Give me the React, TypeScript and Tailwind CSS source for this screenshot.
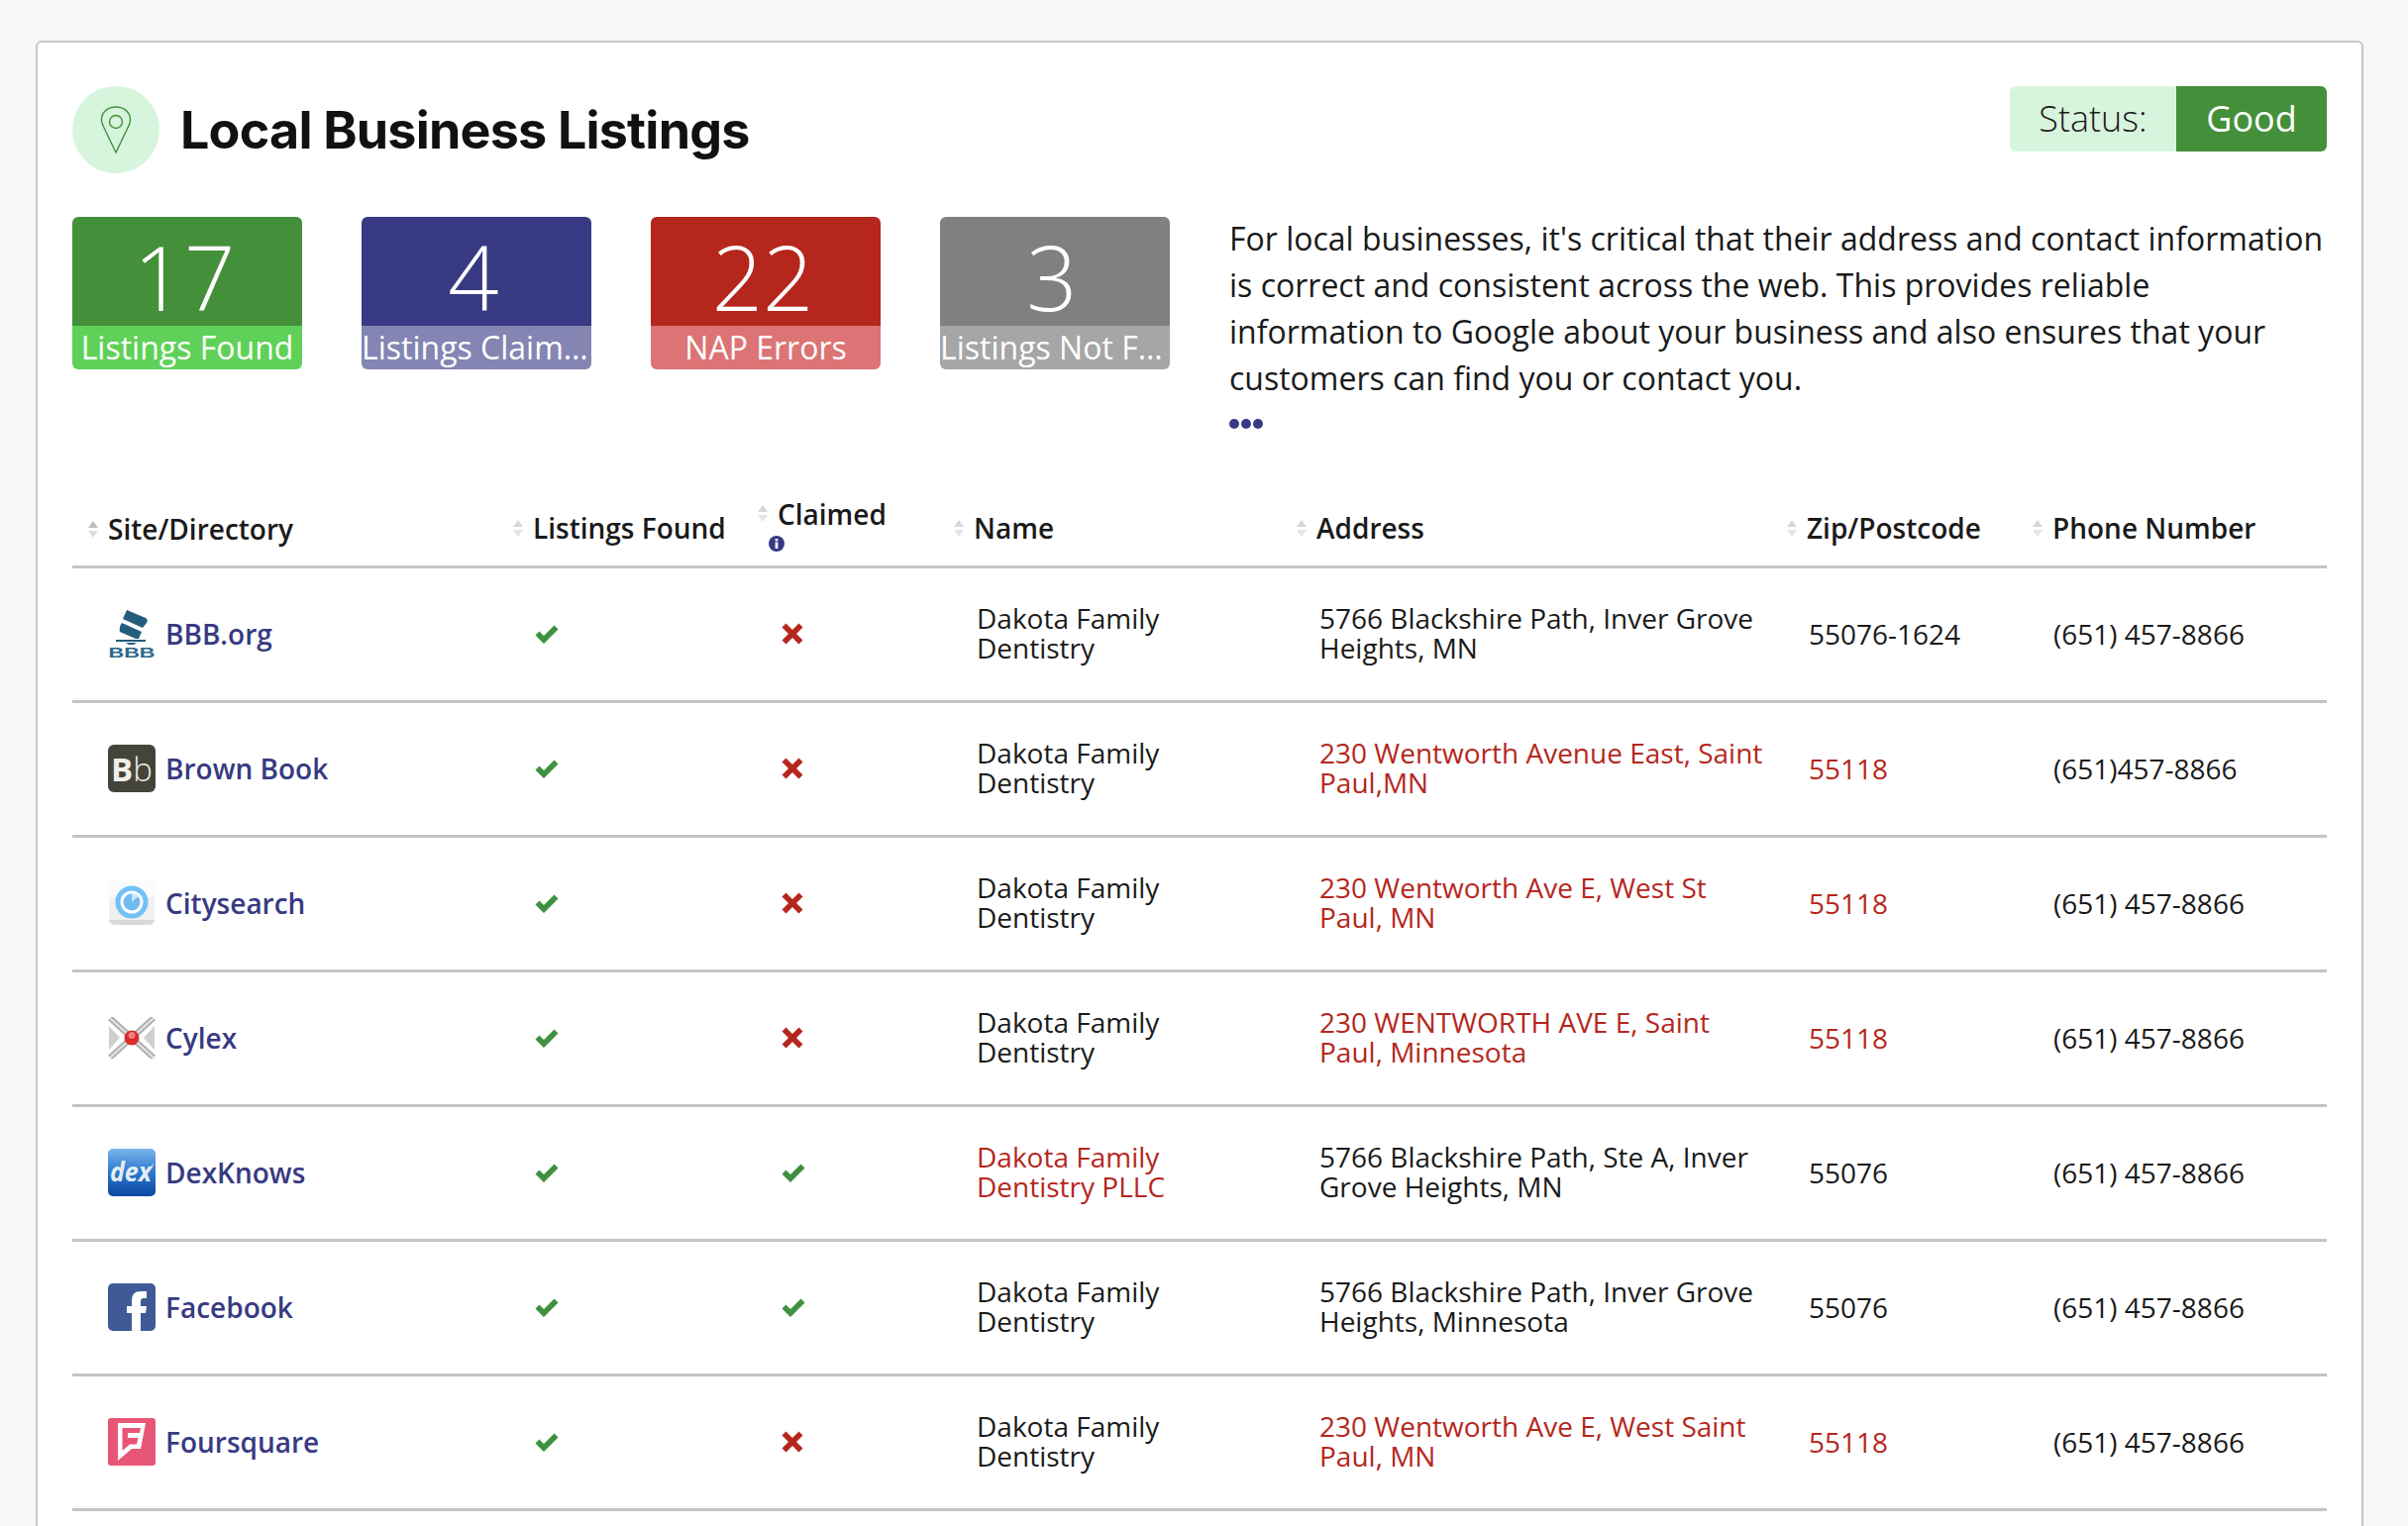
import { ReactNode } from "react"

const indigo = "#373a82"

function SortIcon({ dark }: { dark?: boolean }) {
  return (
    <svg viewBox="0 0 10 17" className="mr-[10px] inline-block h-[17px] w-[10px] shrink-0">
      <path d="M5 0 L10 7 H0 Z" fill={dark ? "#bdbdbd" : "#d8d8d8"} />
      <path d="M5 17 L10 10 H0 Z" fill={dark ? "#dedede" : "#e4e4e4"} />
    </svg>
  )
}

function Check() {
  return (
    <svg viewBox="0 0 24 19" className="h-[19px] w-[24px]">
      <path d="M0.5 10.5 L4.5 6.5 L9 11 L19.5 0.5 L23.5 4.5 L9 19 Z" fill="#3f9140" />
    </svg>
  )
}

function Cross() {
  return (
    <svg viewBox="0 0 22 22" className="h-[22px] w-[22px]">
      <path d="M4.5 0.5 L11 7 L17.5 0.5 L21.5 4.5 L15 11 L21.5 17.5 L17.5 21.5 L11 15 L4.5 21.5 L0.5 17.5 L7 11 L0.5 4.5 Z" fill="#b5271d" />
    </svg>
  )
}

function BbbLogo() {
  return (
    <svg viewBox="0 0 48 48" className="h-[48px] w-[48px] overflow-visible">
      <path d="M19 0 L38 8 Q41 10 39 13 L35 18 L15 9 Z" fill="#245d7c" />
      <path d="M14 13 L34 22 L31 29 L28 29 L12 22 Q11 17 14 13 Z" fill="#245d7c" />
      <path d="M8 30 H38 V32 H8 Z" fill="#245d7c" />
      <path d="M18 33 H29 L26 35 H21 Z" fill="#245d7c" />
      <text x="24" y="47.5" textAnchor="middle" fontSize="15" fontWeight="800" fill="#2b6a8a" fontFamily="'Liberation Sans', sans-serif" textLength="47" lengthAdjust="spacingAndGlyphs">BBB</text>
    </svg>
  )
}

function BrownBookLogo() {
  return (
    <div className="flex h-[48px] w-[48px] items-center justify-center rounded-[6px] bg-[#45443b] font-['Open_Sans',sans-serif] text-[33px] leading-none">
      <span className="font-bold text-[#f0efe8]">B</span>
      <span className="font-light text-[#f0efe8]">b</span>
    </div>
  )
}

function CitysearchLogo() {
  return (
    <svg viewBox="0 0 48 48" className="h-[48px] w-[48px]">
      <rect x="1" y="2" width="46" height="40" rx="3" fill="#fbfbfb" />
      <rect x="1" y="18" width="46" height="24" fill="#f0f0f0" />
      <path d="M1 41 Q2 46 7 46 H41 Q46 46 47 41 Z" fill="#d9d9d9" />
      <circle cx="24" cy="23" r="16" fill="#fff" />
      <circle cx="24" cy="23" r="14" fill="none" stroke="#72c1f6" strokeWidth="5" />
      <circle cx="24" cy="23" r="8.5" fill="#6dbbf0" />
      <path d="M24 23 L24 14 A9 9 0 0 1 31 17 Z" fill="#c9e7fb" />
    </svg>
  )
}

function CylexLogo() {
  return (
    <svg viewBox="0 0 48 42" className="h-[42px] w-[48px]">
      <path d="M1 9 L12 21 L1 33 Z" fill="#cfcfcf" />
      <path d="M47 9 L36 21 L47 33 Z" fill="#cfcfcf" />
      <path d="M2 1 L24 21 L2 41 M46 1 L24 21 L46 41" fill="none" stroke="#b0b0b0" strokeWidth="6" />
      <path d="M2 1 L24 21 L2 41 M46 1 L24 21 L46 41" fill="none" stroke="#e4e4e4" strokeWidth="2" />
      <circle cx="24" cy="21" r="7.5" fill="#d92b2b" />
      <circle cx="24" cy="18.5" r="3.5" fill="#ef7f7f" />
    </svg>
  )
}

function DexLogo() {
  return (
    <svg viewBox="0 0 48 48" className="h-[48px] w-[48px]">
      <defs>
        <linearGradient id="dexBg" x1="0" y1="0" x2="0" y2="1">
          <stop offset="0" stopColor="#7ab6ea" />
          <stop offset="0.5" stopColor="#2a78cf" />
          <stop offset="1" stopColor="#0d47a1" />
        </linearGradient>
      </defs>
      <rect width="48" height="48" rx="5" fill="url(#dexBg)" />
      <text x="2" y="33" fontSize="26" fontWeight="700" fontStyle="italic" fill="#e4eef2" fontFamily="'Open Sans', sans-serif" textLength="42" lengthAdjust="spacingAndGlyphs">dex</text>
      <path d="M36 26 Q41 20 47 14 Q43 21 38 28 Z" fill="#e4eef2" />
    </svg>
  )
}

function FacebookLogo() {
  return (
    <svg viewBox="0 0 48 48" className="h-[48px] w-[48px]">
      <rect width="48" height="48" rx="5" fill="#3f5a96" />
      <path d="M24 48 V30 H19 V23 H24 V17 Q24 8 33 8 H39 V15 H36 Q33 15 33 18 V23 H39 L38 30 H33 V48 Z" fill="#fff" />
    </svg>
  )
}

function FoursquareLogo() {
  return (
    <svg viewBox="0 0 48 48" className="h-[48px] w-[48px]">
      <rect width="48" height="48" rx="3" fill="#e85677" />
      <path fillRule="evenodd" d="M10 5 H38 L33 31 H24 L10 43 Z M14.5 10 V33 L22 26.5 H29 L30.5 20 H20 V15 H32 L33 10 Z" fill="#fff" />
    </svg>
  )
}

type Row = {
  logo: ReactNode
  site: string
  claimed: boolean
  name: string
  nameErr?: boolean
  address: string
  addressErr?: boolean
  zip: string
  zipErr?: boolean
  phone: string
}

const rows: Row[] = [
  { logo: <BbbLogo />, site: "BBB.org", claimed: false, name: "Dakota Family Dentistry", address: "5766 Blackshire Path, Inver Grove Heights, MN", zip: "55076-1624", phone: "(651) 457-8866" },
  { logo: <BrownBookLogo />, site: "Brown Book", claimed: false, name: "Dakota Family Dentistry", address: "230 Wentworth Avenue East, Saint Paul,MN", addressErr: true, zip: "55118", zipErr: true, phone: "(651)457-8866" },
  { logo: <CitysearchLogo />, site: "Citysearch", claimed: false, name: "Dakota Family Dentistry", address: "230 Wentworth Ave E, West St Paul, MN", addressErr: true, zip: "55118", zipErr: true, phone: "(651) 457-8866" },
  { logo: <CylexLogo />, site: "Cylex", claimed: false, name: "Dakota Family Dentistry", address: "230 WENTWORTH AVE E, Saint Paul, Minnesota", addressErr: true, zip: "55118", zipErr: true, phone: "(651) 457-8866" },
  { logo: <DexLogo />, site: "DexKnows", claimed: true, name: "Dakota Family Dentistry PLLC", nameErr: true, address: "5766 Blackshire Path, Ste A, Inver Grove Heights, MN", zip: "55076", phone: "(651) 457-8866" },
  { logo: <FacebookLogo />, site: "Facebook", claimed: true, name: "Dakota Family Dentistry", address: "5766 Blackshire Path, Inver Grove Heights, Minnesota", zip: "55076", phone: "(651) 457-8866" },
  { logo: <FoursquareLogo />, site: "Foursquare", claimed: false, name: "Dakota Family Dentistry", address: "230 Wentworth Ave E, West Saint Paul, MN", addressErr: true, zip: "55118", zipErr: true, phone: "(651) 457-8866" },
]

const stats = [
  { value: "17", label: "Listings Found", top: "bg-[#448f3a]", bottom: "bg-[#5fd158]" },
  { value: "4", label: "Listings Claimed", top: "bg-[#373a82]", bottom: "bg-[#8485b2]" },
  { value: "22", label: "NAP Errors", top: "bg-[#b5271d]", bottom: "bg-[#dc7475]" },
  { value: "3", label: "Listings Not Found", top: "bg-[#808080]", bottom: "bg-[#a6a6a6]" },
]

export default function App() {
  return (
    <div className="h-[1541px] overflow-hidden bg-[#f8f8f6] pl-[36px] pr-[45px] pt-[41px] font-['Open_Sans',sans-serif] text-[#1a1a1a]">
      <div className="h-[1600px] rounded-t-[6px] border-2 border-[#c6c6c6] bg-white px-[35px] pt-[44px]">
        <div className="flex items-start justify-between">
          <div className="flex items-center">
            <div className="flex h-[88px] w-[88px] items-center justify-center rounded-full bg-[#d7f5dd]">
              <svg viewBox="0 0 32 48" className="h-[48px] w-[32px]" fill="none" stroke="#448f3a" strokeWidth="1.4">
                <path d="M16 47 L4 22 Q1 16 1.5 13 C2 6 8 1 16 1 C24 1 30 6 30.5 13 Q31 16 28 22 Z" />
                <circle cx="16" cy="16" r="6.5" />
              </svg>
            </div>
            <h1 className="ml-[21px] mt-[2px] font-['Inter',sans-serif] text-[52px] font-bold leading-none tracking-[-0.8px] text-[#111]">Local Business Listings</h1>
          </div>
          <div className="flex h-[66px] w-[320px] overflow-hidden rounded-[6px] text-[36px]">
            <div className="flex w-[168px] items-center justify-center bg-[#d7f5dd] font-light">Status:</div>
            <div className="flex flex-1 items-center justify-center bg-[#448f3a] text-white">Good</div>
          </div>
        </div>

        <div className="mt-[44px] flex items-start">
          <div className="flex gap-[60px]">
            {stats.map((s) => (
              <div key={s.label} className="h-[154px] w-[232px] overflow-hidden rounded-[6px] text-center text-white">
                <div className={`flex h-[110px] items-center justify-center pr-[6px] pt-[9px] text-[90px] font-light leading-none ${s.top}`}>{s.value}</div>
                <div className={`h-[44px] truncate text-[32px] leading-[44px] ${s.bottom}`}>{s.label}</div>
              </div>
            ))}
          </div>
          <div className="-mr-[2px] ml-[60px] flex-1">
            <p className="-mt-[2px] text-[32px] leading-[47px]">
              For local businesses, it's critical that their address and contact information is correct and consistent across the web. This provides reliable information to Google about your business and also ensures that your customers can find you or contact you.
            </p>
            <div className="mt-[18px] flex gap-[2px]">
              <span className="h-[10px] w-[10px] rounded-full bg-[#373a82]" />
              <span className="h-[10px] w-[10px] rounded-full bg-[#373a82]" />
              <span className="h-[10px] w-[10px] rounded-full bg-[#373a82]" />
            </div>
          </div>
        </div>

        <table className="mt-[59px] w-[2276px] table-fixed border-collapse text-[28px]">
          <colgroup>
            <col className="w-[429px]" />
            <col className="w-[247px]" />
            <col className="w-[197px]" />
            <col className="w-[346px]" />
            <col className="w-[496px]" />
            <col className="w-[248px]" />
            <col className="w-[313px]" />
          </colgroup>
          <thead>
            <tr className="h-[80px] border-b-[3px] border-[#c4c4c4] text-left font-semibold">
              <th className="pl-[16px] pt-[6px] font-semibold">
                <span className="flex items-center whitespace-nowrap"><SortIcon dark />Site/Directory</span>
              </th>
              <th className="pl-[16px] pt-[4px] font-semibold">
                <span className="flex items-center whitespace-nowrap"><SortIcon />Listings Found</span>
              </th>
              <th className="pb-[12px] pl-[16px] pt-[4px] font-semibold">
                <span className="flex items-center whitespace-nowrap"><SortIcon />Claimed</span>
                <svg viewBox="0 0 16 16" className="ml-[11px] mt-[1px] block h-[16px] w-[16px]">
                  <circle cx="8" cy="8" r="8" fill={indigo} />
                  <rect x="6.6" y="6.5" width="2.8" height="6.5" fill="#fff" />
                  <rect x="6.6" y="3" width="2.8" height="2.4" fill="#fff" />
                </svg>
              </th>
              <th className="pl-[17px] pt-[4px] font-semibold">
                <span className="flex items-center whitespace-nowrap"><SortIcon />Name</span>
              </th>
              <th className="pl-[17px] pt-[4px] font-semibold">
                <span className="flex items-center whitespace-nowrap"><SortIcon />Address</span>
              </th>
              <th className="pl-[16px] pt-[4px] font-semibold">
                <span className="flex items-center whitespace-nowrap"><SortIcon />Zip/Postcode</span>
              </th>
              <th className="pl-[16px] pt-[4px] font-semibold">
                <span className="flex items-center whitespace-nowrap"><SortIcon />Phone Number</span>
              </th>
            </tr>
          </thead>
          <tbody>
            {rows.map((r) => (
              <tr key={r.site} className="h-[136px] border-b-[3px] border-[#c4c4c4] text-[28px] leading-[30px]">
                <td className="pl-[36px]">
                  <div className="flex items-center">
                    <div className="flex w-[48px] shrink-0 items-center justify-center">{r.logo}</div>
                    <span className="ml-[10px] font-semibold text-[#373a82]">{r.site}</span>
                  </div>
                </td>
                <td className="pl-[38px]"><Check /></td>
                <td className="pl-[40px]">{r.claimed ? <Check /> : <Cross />}</td>
                <td className={`pb-[2px] pl-[40px] pr-[50px] ${r.nameErr ? "text-[#b5271d]" : ""}`}>{r.name}</td>
                <td className={`pb-[2px] pl-[40px] ${r.addressErr ? "text-[#b5271d]" : ""}`}>{r.address}</td>
                <td className={`pl-[38px] ${r.zipErr ? "text-[#b5271d]" : ""}`}>{r.zip}</td>
                <td className="pl-[37px]">{r.phone}</td>
              </tr>
            ))}
          </tbody>
        </table>
      </div>
    </div>
  )
}
